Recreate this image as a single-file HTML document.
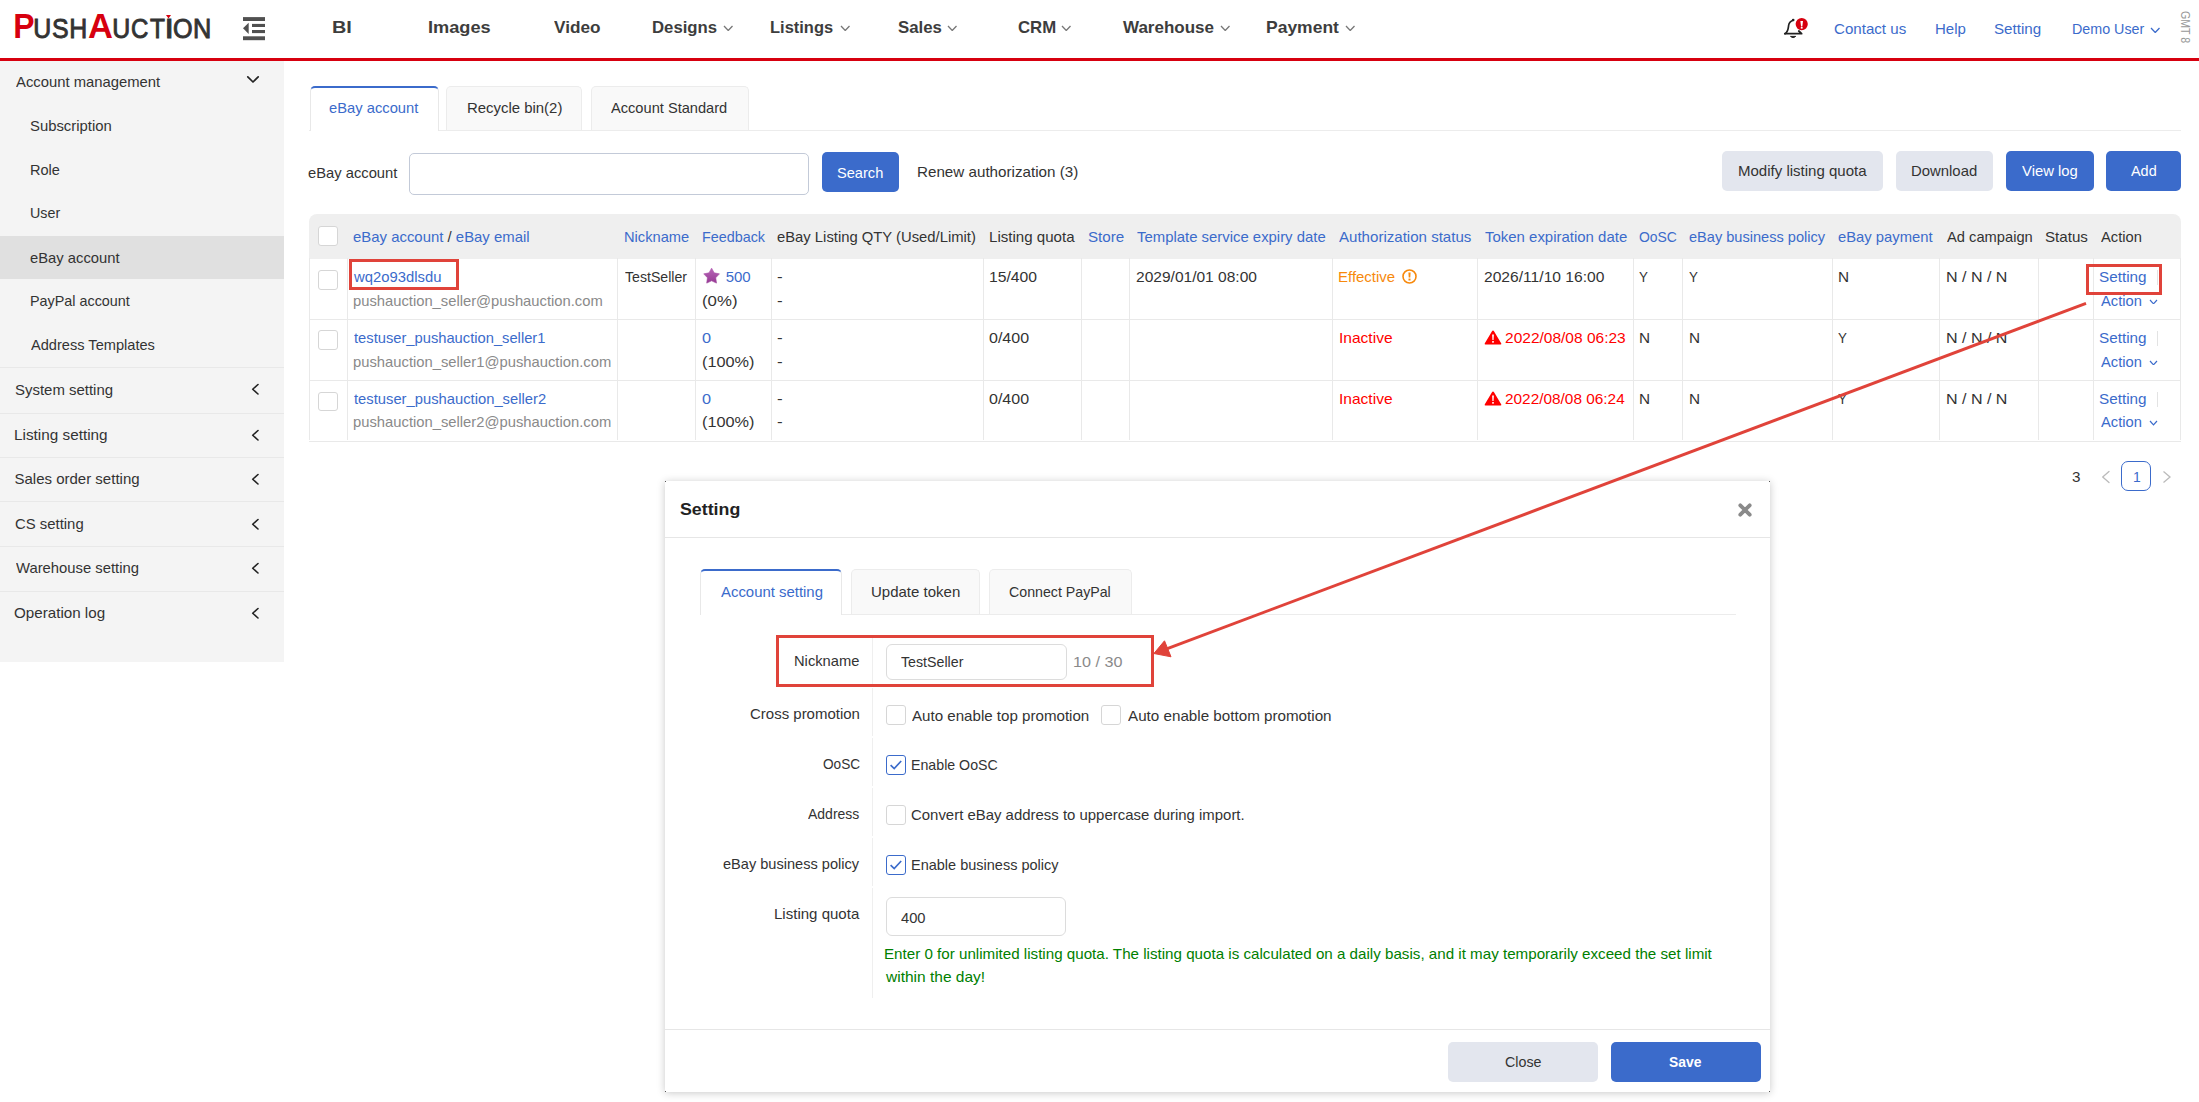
<!DOCTYPE html>
<html><head><meta charset="utf-8">
<style>
*{box-sizing:border-box;margin:0;padding:0}
html,body{width:2199px;height:1102px;overflow:hidden;background:#fff}
body{position:relative;font-family:"Liberation Sans",sans-serif;font-size:15px;line-height:20px;color:#333}
.a{position:absolute}
.t{position:absolute;white-space:nowrap;line-height:20px;font-size:15px}
.nav{position:absolute;white-space:nowrap;line-height:20px;font-size:17px;font-weight:bold;color:#3d3d3d}
.b{color:#3b6bcb}
.g{color:#888}
.r{color:#f00}
.lg{position:absolute;white-space:nowrap;line-height:40px}
</style></head><body>
<div class="a" style="left:0px;top:58px;width:2199px;height:3px;background:#d7000f"></div>
<div class="lg" style="left:12.6px;top:5.9px;font-size:35px;font-weight:bold;color:#d7000f;transform-origin:2.1500000000000004px 0;transform:scaleX(0.911)">P</div>
<div class="lg" style="left:32.5px;top:8.75px;font-size:27px;font-weight:normal;color:#333;-webkit-text-stroke:0.9px #333;transform-origin:2.0px 0;transform:scaleX(0.922)">U</div>
<div class="lg" style="left:51.75px;top:8.5px;font-size:27px;font-weight:normal;color:#333;-webkit-text-stroke:0.9px #333;transform-origin:1.0px 0;transform:scaleX(0.922)">S</div>
<div class="lg" style="left:69px;top:8.5px;font-size:27px;font-weight:normal;color:#333;-webkit-text-stroke:0.9px #333;transform-origin:2px 0;transform:scaleX(0.922)">H</div>
<div class="lg" style="left:87.6px;top:5.9px;font-size:35px;font-weight:bold;color:#d7000f;transform-origin:1.1500000000000057px 0;transform:scaleX(0.987)">A</div>
<div class="lg" style="left:112px;top:8.75px;font-size:27px;font-weight:normal;color:#333;-webkit-text-stroke:0.9px #333;transform-origin:2px 0;transform:scaleX(0.922)">U</div>
<div class="lg" style="left:130.75px;top:8.5px;font-size:27px;font-weight:normal;color:#333;-webkit-text-stroke:0.9px #333;transform-origin:1.0px 0;transform:scaleX(0.889)">C</div>
<div class="lg" style="left:150px;top:8.75px;font-size:27px;font-weight:normal;color:#333;-webkit-text-stroke:0.9px #333;transform-origin:0px 0;transform:scaleX(0.906)">T</div>
<div class="lg" style="left:165px;top:8.75px;font-size:27px;font-weight:normal;color:#333;-webkit-text-stroke:0.9px #333;transform-origin:2px 0;transform:scaleX(1.250)">I</div>
<div class="lg" style="left:172.75px;top:8.5px;font-size:27px;font-weight:normal;color:#333;-webkit-text-stroke:0.9px #333;transform-origin:1.0px 0;transform:scaleX(0.934)">O</div>
<div class="lg" style="left:193px;top:8.75px;font-size:27px;font-weight:normal;color:#333;-webkit-text-stroke:0.9px #333;transform-origin:2px 0;transform:scaleX(0.938)">N</div>
<svg class="a" style="left:166px;top:14.5px" width="6" height="4" viewBox="0 0 6 4"><path d="M0 0 L5 0 L2.5 3.5Z" fill="#d7000f"/></svg>
<svg class="a" style="left:243px;top:17px" width="23" height="24" viewBox="0 0 23 24">
<rect x="0" y="0.1" width="22" height="3.9" fill="#505050"/>
<rect x="9" y="6.9" width="13" height="3.1" fill="#505050"/>
<rect x="9" y="13" width="13" height="3.1" fill="#505050"/>
<rect x="0" y="19.3" width="22" height="3.9" fill="#505050"/>
<path d="M0 11.3 L5.7 5.7 L5.7 17 Z" fill="#505050"/>
</svg>
<div class="nav" style="left:332.33px;top:18px;;transform-origin:0 0;transform:scaleX(1.1667)">BI</div>
<div class="nav" style="left:428.43px;top:18px;;transform-origin:0 0;transform:scaleX(1.0702)">Images</div>
<div class="nav" style="left:554.00px;top:18px;;transform-origin:0 0;transform:scaleX(1.0111)">Video</div>
<div class="nav" style="left:652.02px;top:18px;;transform-origin:0 0;transform:scaleX(0.9846)">Designs</div>
<svg class="a" style="left:722.5px;top:24.5px" width="10.5" height="6.5" viewBox="-1 -1 10.5 6.5"><path d="M0 0 L4.25 4.5 L8.5 0" fill="none" stroke="#777" stroke-width="1.3"/></svg>
<div class="nav" style="left:770.03px;top:18px;;transform-origin:0 0;transform:scaleX(0.9688)">Listings</div>
<svg class="a" style="left:840px;top:24.5px" width="10.5" height="6.5" viewBox="-1 -1 10.5 6.5"><path d="M0 0 L4.25 4.5 L8.5 0" fill="none" stroke="#777" stroke-width="1.3"/></svg>
<div class="nav" style="left:897.51px;top:18px;;transform-origin:0 0;transform:scaleX(0.9884)">Sales</div>
<svg class="a" style="left:947px;top:24.5px" width="10.5" height="6.5" viewBox="-1 -1 10.5 6.5"><path d="M0 0 L4.25 4.5 L8.5 0" fill="none" stroke="#777" stroke-width="1.3"/></svg>
<div class="nav" style="left:1017.51px;top:18px;;transform-origin:0 0;transform:scaleX(0.9865)">CRM</div>
<svg class="a" style="left:1061px;top:24.5px" width="10.5" height="6.5" viewBox="-1 -1 10.5 6.5"><path d="M0 0 L4.25 4.5 L8.5 0" fill="none" stroke="#777" stroke-width="1.3"/></svg>
<div class="nav" style="left:1123.00px;top:18px;;transform-origin:0 0;transform:scaleX(1.0000)">Warehouse</div>
<svg class="a" style="left:1220px;top:24.5px" width="10.5" height="6.5" viewBox="-1 -1 10.5 6.5"><path d="M0 0 L4.25 4.5 L8.5 0" fill="none" stroke="#777" stroke-width="1.3"/></svg>
<div class="nav" style="left:1265.97px;top:18px;;transform-origin:0 0;transform:scaleX(1.0286)">Payment</div>
<svg class="a" style="left:1345px;top:24.5px" width="10.5" height="6.5" viewBox="-1 -1 10.5 6.5"><path d="M0 0 L4.25 4.5 L8.5 0" fill="none" stroke="#777" stroke-width="1.3"/></svg>
<svg class="a" style="left:1778px;top:12px" width="34" height="30" viewBox="0 0 34 30">
<path d="M15.2 8.2 C13 9 11 10.2 10.6 13.5 C10.2 16.5 10.2 19.5 7.2 21.7" fill="none" stroke="#222" stroke-width="1.7" stroke-linecap="round"/>
<circle cx="15.2" cy="8" r="1.3" fill="#222"/>
<path d="M6.8 21.7 L23.6 21.7 L20.8 19" fill="none" stroke="#222" stroke-width="1.8" stroke-linecap="round" stroke-linejoin="round"/>
<path d="M12.5 24.4 Q15.1 26.9 17.7 24.4 Z" fill="#222" stroke="#222" stroke-width="1"/>
<circle cx="23.7" cy="12.1" r="6.1" fill="#d7000f"/>
<path d="M22.4 9 L25 9 L24.3 14.4 L23.1 14.4 Z" fill="#fff"/><rect x="22.8" y="15" width="1.8" height="1.6" fill="#fff"/>
</svg>
<div class="t b" style="left:1834.49px;top:19px;;transform-origin:0 0;transform:scaleX(1.0071)">Contact us</div>
<div class="t b" style="left:1935.00px;top:19px;;transform-origin:0 0;transform:scaleX(1.0000)">Help</div>
<div class="t b" style="left:1994.49px;top:19px;;transform-origin:0 0;transform:scaleX(1.0111)">Setting</div>
<div class="t b" style="left:2071.55px;top:19px;;transform-origin:0 0;transform:scaleX(0.9533)">Demo User</div>
<svg class="a" style="left:2150px;top:26.5px" width="10.5" height="6.5" viewBox="-1 -1 10.5 6.5"><path d="M0 0 L4.25 4.5 L8.5 0" fill="none" stroke="#3b6bcb" stroke-width="1.3"/></svg>
<div class="a" style="left:2176px;top:11px;width:16px;height:32px;"><div style="position:absolute;left:16px;top:0;transform-origin:0 0;transform:rotate(90deg) scaleX(0.85);font-size:12.5px;line-height:14px;color:#999;white-space:nowrap">GMT 8</div></div>
<div class="a" style="left:0px;top:61px;width:284px;height:601px;background:#f4f4f4"></div>
<div class="a" style="left:0px;top:236px;width:284px;height:42.5px;background:#e0e0e0"></div>
<div class="t" style="left:15.50px;top:72.2px;color:#333;transform-origin:0 0;transform:scaleX(0.9884)">Account management</div>
<svg class="a" style="left:246px;top:75px" width="14" height="9" viewBox="-1 -1 14 9"><path d="M0.8 0.8 L6 6 L11.2 0.8" fill="none" stroke="#222" stroke-width="1.7" stroke-linecap="round" stroke-linejoin="round"/></svg>
<div class="t" style="left:29.51px;top:115.69999999999999px;color:#333;transform-origin:0 0;transform:scaleX(0.9901)">Subscription</div>
<div class="t" style="left:29.53px;top:160px;color:#333;transform-origin:0 0;transform:scaleX(0.9690)">Role</div>
<div class="t" style="left:29.55px;top:203.4px;color:#333;transform-origin:0 0;transform:scaleX(0.9516)">User</div>
<div class="t" style="left:29.51px;top:247.7px;color:#333;transform-origin:0 0;transform:scaleX(0.9856)">eBay account</div>
<div class="t" style="left:29.54px;top:290.9px;color:#333;transform-origin:0 0;transform:scaleX(0.9573)">PayPal account</div>
<div class="t" style="left:30.50px;top:334.5px;color:#333;transform-origin:0 0;transform:scaleX(0.9732)">Address Templates</div>
<div class="a" style="left:0px;top:367px;width:284px;height:1px;background:#e8e8e8"></div>
<div class="t" style="left:14.50px;top:379.8px;color:#333;transform-origin:0 0;transform:scaleX(0.9969)">System setting</div>
<svg class="a" style="left:251px;top:383.2px" width="8.5" height="12.5" viewBox="-1 -1 8.5 12.5"><path d="M6.0 0.5 L0.7 5.25 L6.0 10.0" fill="none" stroke="#222" stroke-width="1.6" stroke-linecap="round" stroke-linejoin="round"/></svg>
<div class="a" style="left:0px;top:412.5px;width:284px;height:1px;background:#e8e8e8"></div>
<div class="t" style="left:14.48px;top:425px;color:#333;transform-origin:0 0;transform:scaleX(1.0200)">Listing setting</div>
<svg class="a" style="left:251px;top:428.7px" width="8.5" height="12.5" viewBox="-1 -1 8.5 12.5"><path d="M6.0 0.5 L0.7 5.25 L6.0 10.0" fill="none" stroke="#222" stroke-width="1.6" stroke-linecap="round" stroke-linejoin="round"/></svg>
<div class="a" style="left:0px;top:456.6px;width:284px;height:1px;background:#e8e8e8"></div>
<div class="t" style="left:14.50px;top:469.4px;color:#333;transform-origin:0 0;transform:scaleX(1.0000)">Sales order setting</div>
<svg class="a" style="left:251px;top:472.8px" width="8.5" height="12.5" viewBox="-1 -1 8.5 12.5"><path d="M6.0 0.5 L0.7 5.25 L6.0 10.0" fill="none" stroke="#222" stroke-width="1.6" stroke-linecap="round" stroke-linejoin="round"/></svg>
<div class="a" style="left:0px;top:501.4px;width:284px;height:1px;background:#e8e8e8"></div>
<div class="t" style="left:14.51px;top:514.2px;color:#333;transform-origin:0 0;transform:scaleX(0.9925)">CS setting</div>
<svg class="a" style="left:251px;top:517.6px" width="8.5" height="12.5" viewBox="-1 -1 8.5 12.5"><path d="M6.0 0.5 L0.7 5.25 L6.0 10.0" fill="none" stroke="#222" stroke-width="1.6" stroke-linecap="round" stroke-linejoin="round"/></svg>
<div class="a" style="left:0px;top:546.2px;width:284px;height:1px;background:#e8e8e8"></div>
<div class="t" style="left:15.50px;top:558.3px;color:#333;transform-origin:0 0;transform:scaleX(0.9879)">Warehouse setting</div>
<svg class="a" style="left:251px;top:562.4px" width="8.5" height="12.5" viewBox="-1 -1 8.5 12.5"><path d="M6.0 0.5 L0.7 5.25 L6.0 10.0" fill="none" stroke="#222" stroke-width="1.6" stroke-linecap="round" stroke-linejoin="round"/></svg>
<div class="a" style="left:0px;top:591.2px;width:284px;height:1px;background:#e8e8e8"></div>
<div class="t" style="left:14.49px;top:603.1px;color:#333;transform-origin:0 0;transform:scaleX(1.0114)">Operation log</div>
<svg class="a" style="left:251px;top:607.4px" width="8.5" height="12.5" viewBox="-1 -1 8.5 12.5"><path d="M6.0 0.5 L0.7 5.25 L6.0 10.0" fill="none" stroke="#222" stroke-width="1.6" stroke-linecap="round" stroke-linejoin="round"/></svg>
<div class="a" style="left:309px;top:130px;width:1872px;height:1px;background:#ececec"></div>
<div class="a" style="left:309.5px;top:86px;width:129.0px;height:45px;background:#fff;border:1px solid #e8e8e8;border-top:2.5px solid #3b6bcb;border-bottom:none;border-radius:5px 5px 0 0"></div>
<div class="t b" style="left:328.52px;top:98px;;transform-origin:0 0;transform:scaleX(0.9833)">eBay account</div>
<div class="a" style="left:446px;top:86px;width:135.5px;height:44px;background:#f9f9f9;border:1px solid #ececec;border-bottom:none;border-radius:5px 5px 0 0"></div>
<div class="t" style="left:466.51px;top:98px;color:#333;transform-origin:0 0;transform:scaleX(0.9947)">Recycle bin(2)</div>
<div class="a" style="left:590.5px;top:86px;width:158.0px;height:44px;background:#f9f9f9;border:1px solid #ececec;border-bottom:none;border-radius:5px 5px 0 0"></div>
<div class="t" style="left:611.00px;top:98px;color:#333;transform-origin:0 0;transform:scaleX(0.9748)">Account Standard</div>
<div class="t" style="left:307.52px;top:163px;color:#333;transform-origin:0 0;transform:scaleX(0.9833)">eBay account</div>
<div class="a" style="left:409px;top:152.5px;width:400px;height:42px;border:1px solid #c3cad8;border-radius:5px;background:#fff"></div>
<div class="a" style="left:822px;top:152px;width:77px;height:40px;background:#3b6bcb;border-radius:5px"></div>
<div class="t" style="left:836.83px;top:162.7px;color:#fff;transform-origin:0 0;transform:scaleX(0.9739)">Search</div>
<div class="t" style="left:916.59px;top:162px;color:#333;transform-origin:0 0;transform:scaleX(1.0127)">Renew authorization (3)</div>
<div class="a" style="left:1722px;top:151px;width:161px;height:40px;background:#e3e6ee;border-radius:5px"></div>
<div class="t" style="left:1737.60px;top:160.6px;color:#333;transform-origin:0 0;transform:scaleX(1.0016)">Modify listing quota</div>
<div class="a" style="left:1896px;top:151px;width:97px;height:40px;background:#e3e6ee;border-radius:5px"></div>
<div class="t" style="left:1911.41px;top:160.6px;color:#333;transform-origin:0 0;transform:scaleX(0.9923)">Download</div>
<div class="a" style="left:2006px;top:151px;width:88px;height:40px;background:#3b6bcb;border-radius:5px"></div>
<div class="t" style="left:2022.30px;top:160.6px;color:#fff;transform-origin:0 0;transform:scaleX(0.9893)">View log</div>
<div class="a" style="left:2106px;top:151px;width:75px;height:40px;background:#3b6bcb;border-radius:5px"></div>
<div class="t" style="left:2131.00px;top:160.6px;color:#fff;transform-origin:0 0;transform:scaleX(0.9615)">Add</div>
<div class="t" style="left:2072.39px;top:467px;color:#333;transform-origin:0 0;transform:scaleX(1.0143)">3</div>
<svg class="a" style="left:2101px;top:469.5px" width="9.5" height="14" viewBox="-1 -1 9.5 14"><path d="M7.0 0.5 L0.7 6.0 L7.0 11.5" fill="none" stroke="#bbb" stroke-width="1.3" stroke-linecap="round" stroke-linejoin="round"/></svg>
<div class="a" style="left:2121px;top:461px;width:30px;height:30px;border:1px solid #3b6bcb;border-radius:7px"></div>
<div class="t b" style="left:2132.57px;top:467px;;transform-origin:0 0;transform:scaleX(0.9286)">1</div>
<svg class="a" style="left:2162px;top:469.5px" width="10" height="14" viewBox="-1 -1 10 14"><path d="M0.5 0.5 L7 6 L0.5 11.5" fill="none" stroke="#bbb" stroke-width="1.3"/></svg>
<div class="a" style="left:309px;top:214px;width:1871.5px;height:44.5px;background:#efefef;border-radius:8px 8px 0 0"></div>
<div class="a" style="left:309px;top:318.5px;width:1871.5px;height:1px;background:#e9e9e9"></div>
<div class="a" style="left:309px;top:379.5px;width:1871.5px;height:1px;background:#e9e9e9"></div>
<div class="a" style="left:309px;top:440.5px;width:1871.5px;height:1px;background:#e9e9e9"></div>
<div class="a" style="left:309px;top:258px;width:1px;height:182px;background:#e9e9e9"></div>
<div class="a" style="left:2179.5px;top:258px;width:1px;height:182px;background:#e9e9e9"></div>
<div class="a" style="left:346.9px;top:258px;width:1px;height:182px;background:#e9e9e9"></div>
<div class="a" style="left:617.0px;top:258px;width:1px;height:182px;background:#e9e9e9"></div>
<div class="a" style="left:695.0px;top:258px;width:1px;height:182px;background:#e9e9e9"></div>
<div class="a" style="left:770.8px;top:258px;width:1px;height:182px;background:#e9e9e9"></div>
<div class="a" style="left:983.0px;top:258px;width:1px;height:182px;background:#e9e9e9"></div>
<div class="a" style="left:1081.0px;top:258px;width:1px;height:182px;background:#e9e9e9"></div>
<div class="a" style="left:1128.9px;top:258px;width:1px;height:182px;background:#e9e9e9"></div>
<div class="a" style="left:1332.1px;top:258px;width:1px;height:182px;background:#e9e9e9"></div>
<div class="a" style="left:1476.8px;top:258px;width:1px;height:182px;background:#e9e9e9"></div>
<div class="a" style="left:1632.9px;top:258px;width:1px;height:182px;background:#e9e9e9"></div>
<div class="a" style="left:1681.9px;top:258px;width:1px;height:182px;background:#e9e9e9"></div>
<div class="a" style="left:1832.0px;top:258px;width:1px;height:182px;background:#e9e9e9"></div>
<div class="a" style="left:1938.9px;top:258px;width:1px;height:182px;background:#e9e9e9"></div>
<div class="a" style="left:2038.1px;top:258px;width:1px;height:182px;background:#e9e9e9"></div>
<div class="a" style="left:2093.1px;top:258px;width:1px;height:182px;background:#e9e9e9"></div>
<div class="a" style="left:318.3px;top:226.3px;width:19.5px;height:19.5px;border:1px solid #d6d6d6;border-radius:3px;background:#fff"></div>
<div class="t" style="left:353.31px;top:226.5px;;transform-origin:0 0;transform:scaleX(0.9943)"><span class="b">eBay account</span> / <span class="b">eBay email</span></div>
<div class="t b" style="left:624.02px;top:226.5px;;transform-origin:0 0;transform:scaleX(0.9769)">Nickname</div>
<div class="t b" style="left:701.84px;top:226.5px;;transform-origin:0 0;transform:scaleX(0.9569)">Feedback</div>
<div class="t" style="left:777.21px;top:226.5px;color:#333;transform-origin:0 0;transform:scaleX(0.9870)">eBay Listing QTY (Used/Limit)</div>
<div class="t" style="left:988.99px;top:226.5px;color:#333;transform-origin:0 0;transform:scaleX(1.0060)">Listing quota</div>
<div class="t b" style="left:1087.59px;top:226.5px;;transform-origin:0 0;transform:scaleX(1.0118)">Store</div>
<div class="t b" style="left:1137.20px;top:226.5px;;transform-origin:0 0;transform:scaleX(0.9926)">Template service expiry date</div>
<div class="t b" style="left:1339.10px;top:226.5px;;transform-origin:0 0;transform:scaleX(1.0046)">Authorization status</div>
<div class="t b" style="left:1485.10px;top:226.5px;;transform-origin:0 0;transform:scaleX(0.9972)">Token expiration date</div>
<div class="t b" style="left:1639.27px;top:226.5px;;transform-origin:0 0;transform:scaleX(0.9282)">OoSC</div>
<div class="t b" style="left:1689.23px;top:226.5px;;transform-origin:0 0;transform:scaleX(0.9712)">eBay business policy</div>
<div class="t b" style="left:1838.01px;top:226.5px;;transform-origin:0 0;transform:scaleX(0.9874)">eBay payment</div>
<div class="t" style="left:1946.70px;top:226.5px;color:#333;transform-origin:0 0;transform:scaleX(0.9793)">Ad campaign</div>
<div class="t" style="left:2044.59px;top:226.5px;color:#333;transform-origin:0 0;transform:scaleX(1.0098)">Status</div>
<div class="t" style="left:2100.50px;top:226.5px;color:#333;transform-origin:0 0;transform:scaleX(0.9805)">Action</div>
<div class="a" style="left:318.3px;top:270.4px;width:19.5px;height:19.5px;border:1px solid #d6d6d6;border-radius:3px;background:#fff"></div>
<div class="t b" style="left:354.30px;top:266.5px;;transform-origin:0 0;transform:scaleX(0.9886)">wq2o93dlsdu</div>
<div class="t" style="left:353.32px;top:290.5px;color:#8a8a8a;transform-origin:0 0;transform:scaleX(0.9841)">pushauction_seller@pushauction.com</div>
<div class="t" style="left:625.00px;top:266.5px;color:#333;transform-origin:0 0;transform:scaleX(0.9424)">TestSeller</div>
<svg class="a" style="left:700px;top:264px" width="24" height="24" viewBox="0 0 24 24"><defs><linearGradient id="sg" x1="0" y1="0" x2="0" y2="1"><stop offset="0" stop-color="#b866b8"/><stop offset="1" stop-color="#963a94"/></linearGradient></defs><path d="M11.60 4.10 L14.19 8.84 L19.49 9.84 L15.78 13.76 L16.48 19.11 L11.60 16.80 L6.72 19.11 L7.42 13.76 L3.71 9.84 L9.01 8.84Z" fill="url(#sg)" stroke="url(#sg)" stroke-width="0.6" stroke-linejoin="round"/></svg>
<div class="t b" style="left:725.70px;top:266.5px;;transform-origin:0 0;transform:scaleX(1.0000)">500</div>
<div class="t" style="left:701.68px;top:290.5px;color:#333;transform-origin:0 0;transform:scaleX(1.1200)">(0%)</div>
<div class="t" style="left:777.38px;top:266.5px;color:#333;transform-origin:0 0;transform:scaleX(1.1250)">-</div>
<div class="t" style="left:777.38px;top:290.5px;color:#333;transform-origin:0 0;transform:scaleX(1.1250)">-</div>
<div class="t" style="left:988.95px;top:266.5px;color:#333;transform-origin:0 0;transform:scaleX(1.0455)">15/400</div>
<div class="t" style="left:1136.16px;top:266.5px;color:#333;transform-origin:0 0;transform:scaleX(1.0357)">2029/01/01 08:00</div>
<div class="t" style="left:1338.10px;top:266.5px;color:#f7890c;transform-origin:0 0;transform:scaleX(0.9982)">Effective</div>
<svg class="a" style="left:1401.5px;top:268.8px" width="15" height="15" viewBox="0 0 15 15"><circle cx="7.5" cy="7.5" r="6.5" fill="none" stroke="#f7890c" stroke-width="1.6"/><path d="M6.4 3.6 L8.6 3.6 L8.3 8.6 L6.7 8.6Z" fill="#f7890c"/><rect x="6.5" y="9.6" width="2" height="1.9" fill="#f7890c"/></svg>
<div class="t" style="left:1484.06px;top:266.5px;color:#333;transform-origin:0 0;transform:scaleX(1.0412)">2026/11/10 16:00</div>
<div class="t" style="left:1639.41px;top:266.5px;color:#333;transform-origin:0 0;transform:scaleX(0.8889)">Y</div>
<div class="t" style="left:1689.31px;top:266.5px;color:#333;transform-origin:0 0;transform:scaleX(0.8889)">Y</div>
<div class="t" style="left:1837.98px;top:266.5px;color:#333;transform-origin:0 0;transform:scaleX(1.0222)">N</div>
<div class="t" style="left:1945.63px;top:266.5px;color:#333;transform-origin:0 0;transform:scaleX(1.0679)">N / N / N</div>
<div class="t b" style="left:2099.48px;top:266.5px;;transform-origin:0 0;transform:scaleX(1.0178)">Setting</div>
<div class="a" style="left:2156.5px;top:269.5px;width:1px;height:15px;background:#e3e3e3"></div>
<div class="t b" style="left:2100.50px;top:290.5px;;transform-origin:0 0;transform:scaleX(0.9805)">Action</div>
<svg class="a" style="left:2148.5px;top:298.5px" width="9" height="5.8" viewBox="-1 -1 9 5.8"><path d="M0 0 L3.5 3.8 L7 0" fill="none" stroke="#3b6bcb" stroke-width="1.2"/></svg>
<div class="a" style="left:318.3px;top:330.4px;width:19.5px;height:19.5px;border:1px solid #d6d6d6;border-radius:3px;background:#fff"></div>
<div class="t b" style="left:354.30px;top:327.5px;;transform-origin:0 0;transform:scaleX(0.9810)">testuser_pushauction_seller1</div>
<div class="t" style="left:353.31px;top:351.5px;color:#8a8a8a;transform-origin:0 0;transform:scaleX(0.9854)">pushauction_seller1@pushauction.com</div>
<div class="t b" style="left:701.71px;top:327.5px;;transform-origin:0 0;transform:scaleX(1.0857)">0</div>
<div class="t" style="left:701.72px;top:351.5px;color:#333;transform-origin:0 0;transform:scaleX(1.0848)">(100%)</div>
<div class="t" style="left:777.38px;top:327.5px;color:#333;transform-origin:0 0;transform:scaleX(1.1250)">-</div>
<div class="t" style="left:777.38px;top:351.5px;color:#333;transform-origin:0 0;transform:scaleX(1.1250)">-</div>
<div class="t" style="left:988.93px;top:327.5px;color:#333;transform-origin:0 0;transform:scaleX(1.0667)">0/400</div>
<div class="t r" style="left:1338.56px;top:327.5px;;transform-origin:0 0;transform:scaleX(1.0360)">Inactive</div>
<svg class="a" style="left:1484px;top:329.5px" width="18" height="15" viewBox="0 0 18 15"><path d="M9 0.6 Q9.6 0.6 10 1.3 L17.3 13.4 Q17.6 14.4 16.6 14.5 L1.4 14.5 Q0.4 14.4 0.7 13.4 L8 1.3 Q8.4 0.6 9 0.6Z" fill="#f00"/><path d="M8.1 4.5 L9.9 4.5 L9.6 10 L8.4 10Z" fill="#fff"/><rect x="8.2" y="11" width="1.6" height="1.7" fill="#fff"/></svg>
<div class="t r" style="left:1505.37px;top:327.5px;;transform-origin:0 0;transform:scaleX(1.0339)">2022/08/08 06:23</div>
<div class="t" style="left:1639.28px;top:327.5px;color:#333;transform-origin:0 0;transform:scaleX(1.0222)">N</div>
<div class="t" style="left:1689.18px;top:327.5px;color:#333;transform-origin:0 0;transform:scaleX(1.0222)">N</div>
<div class="t" style="left:1838.11px;top:327.5px;color:#333;transform-origin:0 0;transform:scaleX(0.8889)">Y</div>
<div class="t" style="left:1945.63px;top:327.5px;color:#333;transform-origin:0 0;transform:scaleX(1.0679)">N / N / N</div>
<div class="t b" style="left:2099.48px;top:327.5px;;transform-origin:0 0;transform:scaleX(1.0178)">Setting</div>
<div class="a" style="left:2156.5px;top:330.5px;width:1px;height:15px;background:#e3e3e3"></div>
<div class="t b" style="left:2100.50px;top:351.5px;;transform-origin:0 0;transform:scaleX(0.9805)">Action</div>
<svg class="a" style="left:2148.5px;top:359.5px" width="9" height="5.8" viewBox="-1 -1 9 5.8"><path d="M0 0 L3.5 3.8 L7 0" fill="none" stroke="#3b6bcb" stroke-width="1.2"/></svg>
<div class="a" style="left:318.3px;top:391.5px;width:19.5px;height:19.5px;border:1px solid #d6d6d6;border-radius:3px;background:#fff"></div>
<div class="t b" style="left:354.30px;top:388.5px;;transform-origin:0 0;transform:scaleX(0.9846)">testuser_pushauction_seller2</div>
<div class="t" style="left:353.31px;top:412.3px;color:#8a8a8a;transform-origin:0 0;transform:scaleX(0.9854)">pushauction_seller2@pushauction.com</div>
<div class="t b" style="left:701.71px;top:388.5px;;transform-origin:0 0;transform:scaleX(1.0857)">0</div>
<div class="t" style="left:701.72px;top:412.3px;color:#333;transform-origin:0 0;transform:scaleX(1.0848)">(100%)</div>
<div class="t" style="left:777.38px;top:388.5px;color:#333;transform-origin:0 0;transform:scaleX(1.1250)">-</div>
<div class="t" style="left:777.38px;top:412.3px;color:#333;transform-origin:0 0;transform:scaleX(1.1250)">-</div>
<div class="t" style="left:988.93px;top:388.5px;color:#333;transform-origin:0 0;transform:scaleX(1.0667)">0/400</div>
<div class="t r" style="left:1338.56px;top:388.5px;;transform-origin:0 0;transform:scaleX(1.0360)">Inactive</div>
<svg class="a" style="left:1484px;top:390.5px" width="18" height="15" viewBox="0 0 18 15"><path d="M9 0.6 Q9.6 0.6 10 1.3 L17.3 13.4 Q17.6 14.4 16.6 14.5 L1.4 14.5 Q0.4 14.4 0.7 13.4 L8 1.3 Q8.4 0.6 9 0.6Z" fill="#f00"/><path d="M8.1 4.5 L9.9 4.5 L9.6 10 L8.4 10Z" fill="#fff"/><rect x="8.2" y="11" width="1.6" height="1.7" fill="#fff"/></svg>
<div class="t r" style="left:1505.38px;top:388.5px;;transform-origin:0 0;transform:scaleX(1.0250)">2022/08/08 06:24</div>
<div class="t" style="left:1639.28px;top:388.5px;color:#333;transform-origin:0 0;transform:scaleX(1.0222)">N</div>
<div class="t" style="left:1689.18px;top:388.5px;color:#333;transform-origin:0 0;transform:scaleX(1.0222)">N</div>
<div class="t" style="left:1838.11px;top:388.5px;color:#333;transform-origin:0 0;transform:scaleX(0.8889)">Y</div>
<div class="t" style="left:1945.63px;top:388.5px;color:#333;transform-origin:0 0;transform:scaleX(1.0679)">N / N / N</div>
<div class="t b" style="left:2099.48px;top:388.5px;;transform-origin:0 0;transform:scaleX(1.0178)">Setting</div>
<div class="a" style="left:2156.5px;top:391.5px;width:1px;height:15px;background:#e3e3e3"></div>
<div class="t b" style="left:2100.50px;top:412.3px;;transform-origin:0 0;transform:scaleX(0.9805)">Action</div>
<svg class="a" style="left:2148.5px;top:420.3px" width="9" height="5.8" viewBox="-1 -1 9 5.8"><path d="M0 0 L3.5 3.8 L7 0" fill="none" stroke="#3b6bcb" stroke-width="1.2"/></svg>
<div class="a" style="left:665px;top:481px;width:1105px;height:611px;background:#fff;box-shadow:0 1px 8px rgba(0,0,0,0.22)"></div>
<div class="a" style="left:664.8px;top:480.6px;width:1.6px;height:1.6px;background:#555"></div>
<div class="a" style="left:1768.8px;top:480.6px;width:1.6px;height:1.6px;background:#555"></div>
<div class="a" style="left:664.8px;top:1090.6px;width:1.6px;height:1.6px;background:#555"></div>
<div class="a" style="left:1768.8px;top:1090.6px;width:1.6px;height:1.6px;background:#555"></div>
<div class="t" style="left:679.55px;top:500px;font-size:17px;font-weight:bold;color:#222;transform-origin:0 0;transform:scaleX(1.0464)">Setting</div>
<svg class="a" style="left:1734.6px;top:500.1px" width="20" height="20" viewBox="0 0 20 20"><path d="M5.3 5.3 L14.7 14.7 M14.7 5.3 L5.3 14.7" stroke="#8a8a8a" stroke-width="3.8" stroke-linecap="round"/></svg>
<div class="a" style="left:665px;top:537px;width:1105px;height:1px;background:#e6e6e6"></div>
<div class="a" style="left:699.7px;top:614px;width:1035.8999999999999px;height:1px;background:#ececec"></div>
<div class="a" style="left:699.7px;top:569.4px;width:142.5px;height:45.60000000000002px;background:#fff;border:1px solid #e8e8e8;border-top:2.5px solid #3b6bcb;border-bottom:none;border-radius:5px 5px 0 0"></div>
<div class="t b" style="left:720.80px;top:581.7px;;transform-origin:0 0;transform:scaleX(0.9941)">Account setting</div>
<div class="a" style="left:851.4px;top:569.4px;width:129.10000000000002px;height:44.60000000000002px;background:#f9f9f9;border:1px solid #ececec;border-bottom:none;border-radius:5px 5px 0 0"></div>
<div class="t" style="left:871.00px;top:581.5px;color:#333;transform-origin:0 0;transform:scaleX(1.0000)">Update token</div>
<div class="a" style="left:989.2px;top:569.4px;width:142.39999999999986px;height:44.60000000000002px;background:#f9f9f9;border:1px solid #ececec;border-bottom:none;border-radius:5px 5px 0 0"></div>
<div class="t" style="left:1009.05px;top:581.5px;color:#333;transform-origin:0 0;transform:scaleX(0.9462)">Connect PayPal</div>
<div class="a" style="left:872px;top:637px;width:1px;height:49px;background:#efefef"></div>
<div class="a" style="left:872px;top:688px;width:1px;height:48px;background:#efefef"></div>
<div class="a" style="left:872px;top:738px;width:1px;height:48px;background:#efefef"></div>
<div class="a" style="left:872px;top:788px;width:1px;height:48px;background:#efefef"></div>
<div class="a" style="left:872px;top:838px;width:1px;height:48px;background:#efefef"></div>
<div class="a" style="left:872px;top:888px;width:1px;height:110px;background:#efefef"></div>
<div class="t" style="left:794.02px;top:651px;color:#333;transform-origin:0 0;transform:scaleX(0.9808)">Nickname</div>
<div class="a" style="left:886.3px;top:644.1px;width:180.3px;height:35.5px;border:1px solid #dcdcdc;border-radius:6px;background:#fff"></div>
<div class="t" style="left:901.00px;top:652px;color:#333;transform-origin:0 0;transform:scaleX(0.9470)">TestSeller</div>
<div class="t" style="left:1072.52px;top:652px;color:#8a8a8a;transform-origin:0 0;transform:scaleX(1.0773)">10 / 30</div>
<div class="t" style="left:750.30px;top:704px;color:#333;transform-origin:0 0;transform:scaleX(0.9991)">Cross promotion</div>
<div class="a" style="left:886.2px;top:705.4px;width:19.5px;height:19.5px;border:1px solid #d6d6d6;border-radius:3px;background:#fff"></div>
<div class="t" style="left:911.90px;top:706px;color:#333;transform-origin:0 0;transform:scaleX(1.0074)">Auto enable top promotion</div>
<div class="a" style="left:1101.1px;top:705.4px;width:19.5px;height:19.5px;border:1px solid #d6d6d6;border-radius:3px;background:#fff"></div>
<div class="t" style="left:1127.70px;top:706px;color:#333;transform-origin:0 0;transform:scaleX(1.0130)">Auto enable bottom promotion</div>
<div class="t" style="left:822.79px;top:754px;color:#333;transform-origin:0 0;transform:scaleX(0.9103)">OoSC</div>
<div class="a" style="left:886.2px;top:755.1px;width:19.5px;height:19.5px;border:1px solid #3b6bcb;border-radius:3px;background:#fff"></div>
<svg class="a" style="left:886.2px;top:755.1px" width="19.5" height="19.5" viewBox="0 0 19 19"><path d="M4.5 9.8 L8 13.3 L14.8 5.8" fill="none" stroke="#3b6bcb" stroke-width="1.6"/></svg>
<div class="t" style="left:910.95px;top:755px;color:#333;transform-origin:0 0;transform:scaleX(0.9456)">Enable OoSC</div>
<div class="t" style="left:807.90px;top:804px;color:#333;transform-origin:0 0;transform:scaleX(0.9327)">Address</div>
<div class="a" style="left:886.2px;top:805.2px;width:19.5px;height:19.5px;border:1px solid #d6d6d6;border-radius:3px;background:#fff"></div>
<div class="t" style="left:910.90px;top:805px;color:#333;transform-origin:0 0;transform:scaleX(0.9955)">Convert eBay address to uppercase during import.</div>
<div class="t" style="left:723.23px;top:854px;color:#333;transform-origin:0 0;transform:scaleX(0.9712)">eBay business policy</div>
<div class="a" style="left:886.2px;top:855.3px;width:19.5px;height:19.5px;border:1px solid #3b6bcb;border-radius:3px;background:#fff"></div>
<svg class="a" style="left:886.2px;top:855.3px" width="19.5" height="19.5" viewBox="0 0 19 19"><path d="M4.5 9.8 L8 13.3 L14.8 5.8" fill="none" stroke="#3b6bcb" stroke-width="1.6"/></svg>
<div class="t" style="left:910.83px;top:854.5px;color:#333;transform-origin:0 0;transform:scaleX(0.9664)">Enable business policy</div>
<div class="t" style="left:774.00px;top:904px;color:#333;transform-origin:0 0;transform:scaleX(1.0024)">Listing quota</div>
<div class="a" style="left:886.2px;top:897.4px;width:180.3px;height:38.3px;border:1px solid #dcdcdc;border-radius:6px;background:#fff"></div>
<div class="t" style="left:900.50px;top:908.3px;color:#333;transform-origin:0 0;transform:scaleX(0.9800)">400</div>
<div class="t" style="left:884.49px;top:944.2px;color:#008000;transform-origin:0 0;transform:scaleX(1.0104)">Enter 0 for unlimited listing quota. The listing quota is calculated on a daily basis, and it may temporarily exceed the set limit</div>
<div class="t" style="left:885.50px;top:967px;color:#008000;transform-origin:0 0;transform:scaleX(1.0337)">within the day!</div>
<div class="a" style="left:665px;top:1028.5px;width:1105px;height:1px;background:#e6e6e6"></div>
<div class="a" style="left:1447.7px;top:1042.4px;width:150.29999999999995px;height:39.19999999999982px;background:#e3e6ee;border-radius:5px"></div>
<div class="t" style="left:1504.75px;top:1052px;color:#333;transform-origin:0 0;transform:scaleX(0.9514)">Close</div>
<div class="a" style="left:1610.8px;top:1042.4px;width:150.29999999999995px;height:39.19999999999982px;background:#3b6bcb;border-radius:5px"></div>
<div class="t" style="left:1668.58px;top:1052px;color:#fff;font-weight:bold;transform-origin:0 0;transform:scaleX(0.9235)">Save</div>
<div class="a" style="left:349px;top:258.9px;width:109.80000000000001px;height:31.600000000000023px;border:3px solid #e0433a"></div>
<div class="a" style="left:2086.1px;top:264.2px;width:75.70000000000027px;height:31.30000000000001px;border:3px solid #e0433a"></div>
<div class="a" style="left:776.25px;top:635.3px;width:377.75px;height:52.10000000000002px;border:3px solid #e0433a"></div>
<svg class="a" style="left:0;top:0" width="2199" height="1102" viewBox="0 0 2199 1102"><line x1="2086" y1="303.3" x2="1166" y2="649.1" stroke="#e0433a" stroke-width="3"/><path d="M1153.9 653.5 L1164.5 640.8 L1171 656.8 Z" fill="#e0433a" stroke="#e0433a" stroke-width="1" stroke-linejoin="round"/></svg>
</body></html>
